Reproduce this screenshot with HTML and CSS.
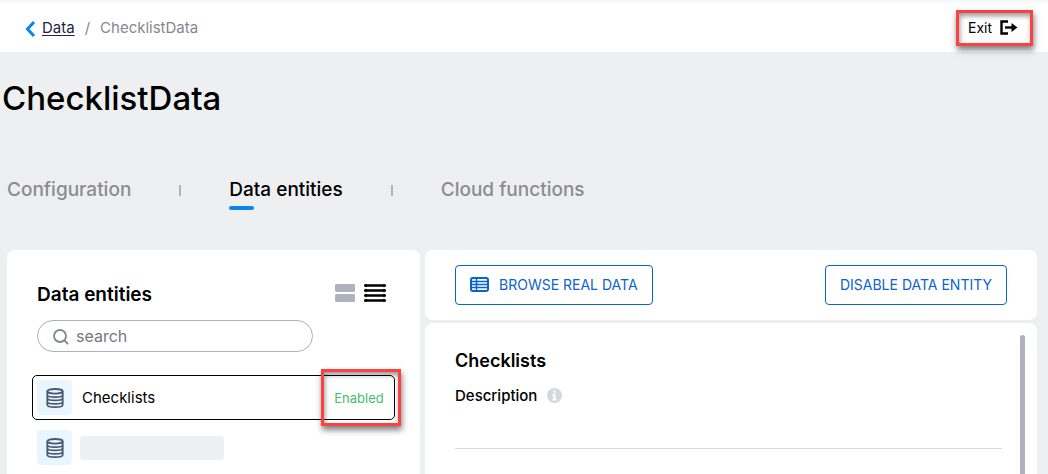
FILE: index.html
```html
<!DOCTYPE html>
<html lang="en">
<head>
<meta charset="utf-8">
<title>ChecklistData</title>
<link rel="stylesheet" href="styles.css">
</head>
<body>
<header class="topbar">
  <nav class="crumbs" aria-label="Breadcrumb">
    <svg class="chevron" width="11" height="20" viewBox="0 0 11 20" aria-hidden="true"><path d="M9 4 2.500 11 9 18" fill="none" stroke="#0a84ef" stroke-width="3"/></svg>
    <a class="crumb-link" href="#data">Data</a>
    <span class="crumb-sep">/</span>
    <span class="crumb-current">ChecklistData</span>
  </nav>
  <button class="exit callout" type="button">
    <span>Exit</span>
    <svg width="18" height="16" viewBox="0 0 18 16" aria-hidden="true"><path d="M8 1.500H1.500v12H8" fill="none" stroke="#000" stroke-width="2.400"/><path d="M5 7.500h8" stroke="#000" stroke-width="2.400"/><path d="M11.500 3 17.500 7.500l-6 4.500z"/></svg>
  </button>
</header>
<main class="page">
  <h1 class="title">ChecklistData</h1>
  <nav class="tabs" aria-label="Sections">
    <a class="tab" href="#configuration">Configuration</a>
    <span class="tab-sep"></span>
    <a class="tab tab-active" href="#entities" aria-current="page">Data entities</a>
    <span class="tab-sep"></span>
    <a class="tab" href="#functions">Cloud functions</a>
  </nav>
  <div class="columns">
    <section class="panel list-panel">
      <div class="list-head">
        <h2 class="heading list-heading">Data entities</h2>
        <div class="views">
          <button class="icon-button" type="button" aria-label="Card view"><svg width="20" height="18" viewBox="0 0 20 18"><path fill="#aeb2bf" d="M1 0h18l1 1v6l-1 1H1L0 7V1zM1 10h18l1 1v6l-1 1H1l-1-1v-6z"/></svg></button>
          <button class="icon-button" type="button" aria-label="List view"><svg width="22" height="18" viewBox="0 0 22 18"><path d="M1 1.500h20M1 6.500h20M1 11.500h20M1 16.500h20" stroke="#000" stroke-width="2.500" stroke-linecap="round"/><path d="M2 .5v2M20 .5v2M2 5.500v2M20 5.500v2M2 10.500v2M20 10.500v2M2 15.500v2M20 15.500v2" stroke="#000" stroke-width="1.500" stroke-linecap="round"/></svg></button>
        </div>
      </div>
      <label class="search">
        <svg width="16" height="16" viewBox="0 0 16 16" aria-hidden="true"><circle cx="7" cy="7" r="6" fill="none" stroke="#85878f" stroke-width="1.800"/><path d="m11.500 11.500 3.500 3.500" stroke="#85878f" stroke-width="1.800"/></svg>
        <input class="search-input" type="text" placeholder="search" aria-label="Search data entities">
      </label>
      <ul class="entities">
        <li class="entity entity-selected">
          <span class="tile"><svg width="18" height="20" viewBox="0 0 18 20" aria-hidden="true"><g fill="none" stroke="#475a72" stroke-width="1.800"><ellipse cx="9" cy="3.300" rx="7.700" ry="2.300"/><path d="M1.300 3.300v13.400c0 1.500 3.500 2.400 7.700 2.400s7.700-.9 7.700-2.400V3.300M1.300 6.700c0 1.500 3.500 2.400 7.700 2.400s7.700-.9 7.700-2.400M1.300 10c0 1.500 3.500 2.400 7.700 2.400s7.700-.9 7.700-2.400M1.300 13.400c0 1.500 3.500 2.400 7.700 2.400s7.700-.9 7.700-2.400"/></g></svg></span>
          <span class="entity-name">Checklists</span>
          <span class="status callout">Enabled</span>
        </li>
        <li class="entity">
          <span class="tile"><svg width="18" height="20" viewBox="0 0 18 20" aria-hidden="true"><g fill="none" stroke="#475a72" stroke-width="1.800"><ellipse cx="9" cy="3.300" rx="7.700" ry="2.300"/><path d="M1.300 3.300v13.400c0 1.500 3.500 2.400 7.700 2.400s7.700-.9 7.700-2.400V3.300M1.300 6.700c0 1.500 3.500 2.400 7.700 2.400s7.700-.9 7.700-2.400M1.300 10c0 1.500 3.500 2.400 7.700 2.400s7.700-.9 7.700-2.400M1.300 13.400c0 1.500 3.500 2.400 7.700 2.400s7.700-.9 7.700-2.400"/></g></svg></span>
          <span class="placeholder"></span>
        </li>
      </ul>
    </section>
    <div class="detail">
      <section class="panel actions">
        <button class="button" type="button">
          <svg width="19" height="15" viewBox="0 0 19 15" aria-hidden="true"><rect x="1" y="1" width="17" height="13" rx="2" fill="none" stroke="#0b63ce" stroke-width="2"/><path d="M1 4.500h17M1 7.500h17M1 10.500h17M6.500 1v13" stroke="#0b63ce" stroke-width="1.500"/></svg>
          Browse real data
        </button>
        <button class="button" type="button">Disable data entity</button>
      </section>
      <section class="panel form-panel">
        <div class="form">
          <h2 class="heading">Checklists</h2>
          <div class="field-head">
            <label for="description">Description</label>
            <svg width="15" height="15" viewBox="0 0 15 15" aria-hidden="true"><circle cx="7.500" cy="7.500" r="7.500" fill="#d5d7dc"/><path fill="#fff" d="M6.300 2.500h2.400v2.200H6.300zM5.300 6h3.400v5h1v1.500H5.300V11h1V7.500h-1z"/></svg>
          </div>
          <input class="field" id="description" type="text">
        </div>
        <div class="scroll-thumb"></div>
      </section>
    </div>
  </div>
</main>
</body>
</html>
```
FILE: styles.css
```css
* { box-sizing: border-box; }

body {
  margin: 0;
  height: 100vh;
  overflow: hidden;
  display: flex;
  flex-direction: column;
  background: #eeeff1;
  color: #000;
  font-family: Inter, "Liberation Sans", sans-serif;
  font-size: 15px;
}

h1, h2, ul { margin: 0; padding: 0; }
svg { display: block; flex: none; }
button { font: inherit; background: none; cursor: pointer; }

.callout {
  border: 3px solid #fb4141;
  box-shadow: 1px 4px 6px rgba(0, 0, 0, .5), inset 1px 3px 5px rgba(0, 0, 0, .4);
}

.topbar {
  display: flex;
  align-items: center;
  justify-content: space-between;
  height: 52px;
  padding: 0 15px 0 25px;
  border-top: 3px solid #f8f8f8;
  background: #fff;
}

.crumbs { display: flex; align-items: center; }
.chevron { margin-right: 6px; }
.crumb-link { color: #23233f; text-underline-offset: 2px; }
.crumb-sep { margin: 0 10px; color: #85878f; }
.crumb-current { color: #85878f; }

.exit {
  display: flex;
  align-items: center;
  gap: 8px;
  height: 36px;
  padding: 0 12px 0 9px;
  font-size: 14px;
}

.page {
  flex: 1;
  display: flex;
  flex-direction: column;
  min-height: 0;
  padding: 25px 11px 0 7px;
}

.title {
  margin-left: -5px;
  font-size: 33px;
  line-height: 42px;
  font-weight: 500;
}

.tabs {
  display: flex;
  align-items: center;
  gap: 48px;
  height: 40px;
  margin: 51px 0 40px;
}

.tab {
  position: relative;
  color: #8b8c93;
  font-size: 19px;
  line-height: 40px;
  font-weight: 500;
  text-decoration: none;
}

.tab-active { color: #000; }

.tab-active::after {
  content: "";
  position: absolute;
  left: 0;
  bottom: 0;
  width: 25px;
  height: 4px;
  border-radius: 2px;
  background: #0a84ef;
}

.tab-sep { width: 2px; height: 11px; background: #aeb2bf; }

.columns {
  flex: 1;
  display: grid;
  grid-template-columns: 413fr 612fr;
  gap: 5px;
  min-height: 0;
}

.panel { background: #fff; border-radius: 8px; }
.list-panel { padding: 32px 25px 0; border-radius: 8px 8px 0 0; }

.list-head {
  display: flex;
  align-items: center;
  justify-content: space-between;
  padding: 0 9px 0 5px;
}

.heading { font-size: 18px; line-height: 26px; font-weight: 600; }
.list-heading { font-size: 19px; }
.views { display: flex; gap: 9px; padding-bottom: 4px; }
.icon-button { padding: 0; border: 0; }

.search {
  display: flex;
  align-items: center;
  gap: 7px;
  width: 76%;
  height: 32px;
  margin: 12px 0 23px 5px;
  padding: 2px 15px 0;
  border: 1px solid #aeb2bf;
  border-radius: 16px;
}

.search-input {
  flex: 1;
  min-width: 0;
  padding: 0 0 3px;
  border: 0;
  outline: 0;
  background: none;
  font: inherit;
  font-size: 16px;
}

.search-input::placeholder { color: #75777d; }

.entities { display: flex; flex-direction: column; gap: 5px; list-style: none; }

.entity {
  display: flex;
  align-items: center;
  height: 45px;
  padding-left: 4px;
  border: 1px solid transparent;
  border-radius: 5px;
}

.entity-selected { border-color: #000; }

.tile {
  display: grid;
  place-items: center;
  width: 35px;
  height: 35px;
  border-radius: 4px;
  background: #eaf6ff;
}

.entity-name { flex: 1; margin-left: 10px; }

.status {
  display: grid;
  place-items: center;
  width: 80px;
  height: 57px;
  margin-right: -7px;
  padding-right: 4px;
  color: #48bd6b;
  font-size: 13px;
}

.placeholder {
  width: 144px;
  height: 24px;
  margin-left: 8px;
  border-radius: 4px;
  background: #eeeff1;
}

.detail { display: flex; flex-direction: column; gap: 3px; min-height: 0; }

.actions {
  display: flex;
  align-items: center;
  justify-content: space-between;
  height: 70px;
  padding: 0 30px;
}

.button {
  display: flex;
  align-items: center;
  gap: 10px;
  height: 40px;
  padding: 0 14px 1px;
  border: 1px solid #0b63ce;
  border-radius: 4px;
  color: #0b63ce;
  font-size: 14px;
  text-transform: uppercase;
}

.form-panel {
  flex: 1;
  display: flex;
  gap: 18px;
  min-height: 0;
  padding: 12px 12px 0 30px;
  border-radius: 8px 8px 0 0;
}

.form { flex: 1; padding-top: 13px; }

.field-head {
  display: flex;
  align-items: center;
  gap: 10px;
  height: 20px;
  margin-top: 11px;
  font-weight: 500;
}

.field {
  width: 100%;
  height: 44px;
  border: 0;
  border-bottom: 1px solid #d5d7dc;
  outline: 0;
  font: inherit;
}

.scroll-thumb { width: 5px; border-radius: 3px 3px 0 0; background: #aeb2bf; }
```
